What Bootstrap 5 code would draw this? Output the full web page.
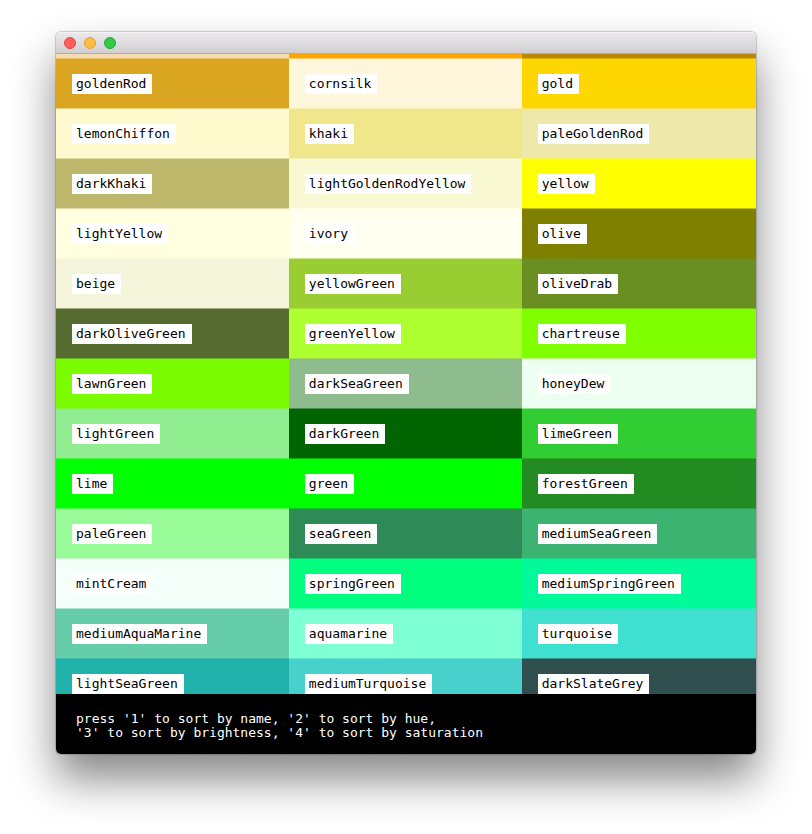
<!DOCTYPE html>
<html lang="en">
<head>
<meta charset="utf-8">
<meta name="viewport" content="width=device-width, initial-scale=1">
<title>Colors</title>
<link href="https://cdn.jsdelivr.net/npm/bootstrap@5.3.0/dist/css/bootstrap.min.css" rel="stylesheet">
<style>
  body { padding: 32px 56px 80px; font-family: "DejaVu Sans Mono", "Liberation Mono", monospace; font-size: 13px; line-height: 20px; }
  .app-window { border-radius: 5px; box-shadow: 0 0 1px 1px rgba(0,0,0,.18), 0 25px 44px rgba(0,0,0,.48); }
  .title-strip { height: 22px; padding: 0 8px; gap: 8px; background: linear-gradient(#ebe9eb, #d1ced2); border-top: 1px solid #f5f4f5; border-bottom: 1px solid #b0acb1; }
  .light { width: 12px; height: 12px; border: 1px solid; }
  .light-close { background: #ff5f5a; border-color: #e04843; }
  .light-min { background: #ffbe40; border-color: #dfa033; }
  .light-zoom { background: #34c84a; border-color: #24aa35; }
  .swatch-pane { min-height: 0; }
  .swatches { grid-template-columns: 1fr 1fr calc(100% / 3 + 1px); }
  .swatch { display: flow-root; height: 50px; background: var(--swatch); }
  .swatch-cut { height: 5px; }
  /* soft edge between a swatch and the one above it */
  .swatch:not(.swatch-cut)::before { content: ""; display: block; height: 1px; margin: -1px 0 15px; background: var(--swatch); opacity: .5; }
  .swatch-name { display: block; width: fit-content; margin-left: 16px; padding: 0 6px 0 4px; background: #fff; color: #000; }
  .hint { padding: 18px 20px 14px; line-height: 14px; }
</style>
<script src="https://cdn.jsdelivr.net/npm/bootstrap@5.3.0/dist/js/bootstrap.bundle.min.js"></script>
</head>
<body class="vh-100 bg-white m-0 d-flex flex-column">
<main class="app-window flex-grow-1 d-flex flex-column overflow-hidden">
  <header class="title-strip d-flex align-items-center flex-shrink-0">
    <button type="button" class="light light-close rounded-circle p-0" aria-label="Close"></button>
    <button type="button" class="light light-min rounded-circle p-0" aria-label="Minimize"></button>
    <button type="button" class="light light-zoom rounded-circle p-0" aria-label="Zoom"></button>
  </header>
  <section class="swatch-pane flex-grow-1 overflow-hidden" aria-label="Color list">
    <ul class="swatches d-grid list-unstyled m-0">
      <li class="swatch swatch-cut" style="--swatch:#f5dbb3"></li>
      <li class="swatch swatch-cut" style="--swatch:orange"></li>
      <li class="swatch swatch-cut" style="--swatch:darkgoldenrod"></li>
      <li class="swatch" style="--swatch:goldenrod"><span class="swatch-name">goldenRod</span></li>
      <li class="swatch" style="--swatch:#fff6db"><span class="swatch-name">cornsilk</span></li>
      <li class="swatch" style="--swatch:gold"><span class="swatch-name">gold</span></li>
      <li class="swatch" style="--swatch:lemonchiffon"><span class="swatch-name">lemonChiffon</span></li>
      <li class="swatch" style="--swatch:khaki"><span class="swatch-name">khaki</span></li>
      <li class="swatch" style="--swatch:palegoldenrod"><span class="swatch-name">paleGoldenRod</span></li>
      <li class="swatch" style="--swatch:darkkhaki"><span class="swatch-name">darkKhaki</span></li>
      <li class="swatch" style="--swatch:#f8f9d2"><span class="swatch-name">lightGoldenRodYellow</span></li>
      <li class="swatch" style="--swatch:yellow"><span class="swatch-name">yellow</span></li>
      <li class="swatch" style="--swatch:lightyellow"><span class="swatch-name">lightYellow</span></li>
      <li class="swatch" style="--swatch:ivory"><span class="swatch-name">ivory</span></li>
      <li class="swatch" style="--swatch:olive"><span class="swatch-name">olive</span></li>
      <li class="swatch" style="--swatch:beige"><span class="swatch-name">beige</span></li>
      <li class="swatch" style="--swatch:yellowgreen"><span class="swatch-name">yellowGreen</span></li>
      <li class="swatch" style="--swatch:olivedrab"><span class="swatch-name">oliveDrab</span></li>
      <li class="swatch" style="--swatch:darkolivegreen"><span class="swatch-name">darkOliveGreen</span></li>
      <li class="swatch" style="--swatch:greenyellow"><span class="swatch-name">greenYellow</span></li>
      <li class="swatch" style="--swatch:chartreuse"><span class="swatch-name">chartreuse</span></li>
      <li class="swatch" style="--swatch:lawngreen"><span class="swatch-name">lawnGreen</span></li>
      <li class="swatch" style="--swatch:darkseagreen"><span class="swatch-name">darkSeaGreen</span></li>
      <li class="swatch" style="--swatch:#edfff0"><span class="swatch-name">honeyDew</span></li>
      <li class="swatch" style="--swatch:lightgreen"><span class="swatch-name">lightGreen</span></li>
      <li class="swatch" style="--swatch:darkgreen"><span class="swatch-name">darkGreen</span></li>
      <li class="swatch" style="--swatch:limegreen"><span class="swatch-name">limeGreen</span></li>
      <li class="swatch" style="--swatch:lime"><span class="swatch-name">lime</span></li>
      <li class="swatch" style="--swatch:lime"><span class="swatch-name">green</span></li>
      <li class="swatch" style="--swatch:forestgreen"><span class="swatch-name">forestGreen</span></li>
      <li class="swatch" style="--swatch:palegreen"><span class="swatch-name">paleGreen</span></li>
      <li class="swatch" style="--swatch:seagreen"><span class="swatch-name">seaGreen</span></li>
      <li class="swatch" style="--swatch:mediumseagreen"><span class="swatch-name">mediumSeaGreen</span></li>
      <li class="swatch" style="--swatch:mintcream"><span class="swatch-name">mintCream</span></li>
      <li class="swatch" style="--swatch:springgreen"><span class="swatch-name">springGreen</span></li>
      <li class="swatch" style="--swatch:mediumspringgreen"><span class="swatch-name">mediumSpringGreen</span></li>
      <li class="swatch" style="--swatch:mediumaquamarine"><span class="swatch-name">mediumAquaMarine</span></li>
      <li class="swatch" style="--swatch:aquamarine"><span class="swatch-name">aquamarine</span></li>
      <li class="swatch" style="--swatch:turquoise"><span class="swatch-name">turquoise</span></li>
      <li class="swatch" style="--swatch:lightseagreen"><span class="swatch-name">lightSeaGreen</span></li>
      <li class="swatch" style="--swatch:mediumturquoise"><span class="swatch-name">mediumTurquoise</span></li>
      <li class="swatch" style="--swatch:darkslategrey"><span class="swatch-name">darkSlateGrey</span></li>
    </ul>
  </section>
  <footer class="hint bg-black text-white flex-shrink-0">press '1' to sort by name, '2' to sort by hue,<br>'3' to sort by brightness, '4' to sort by saturation</footer>
</main>
</body>
</html>
